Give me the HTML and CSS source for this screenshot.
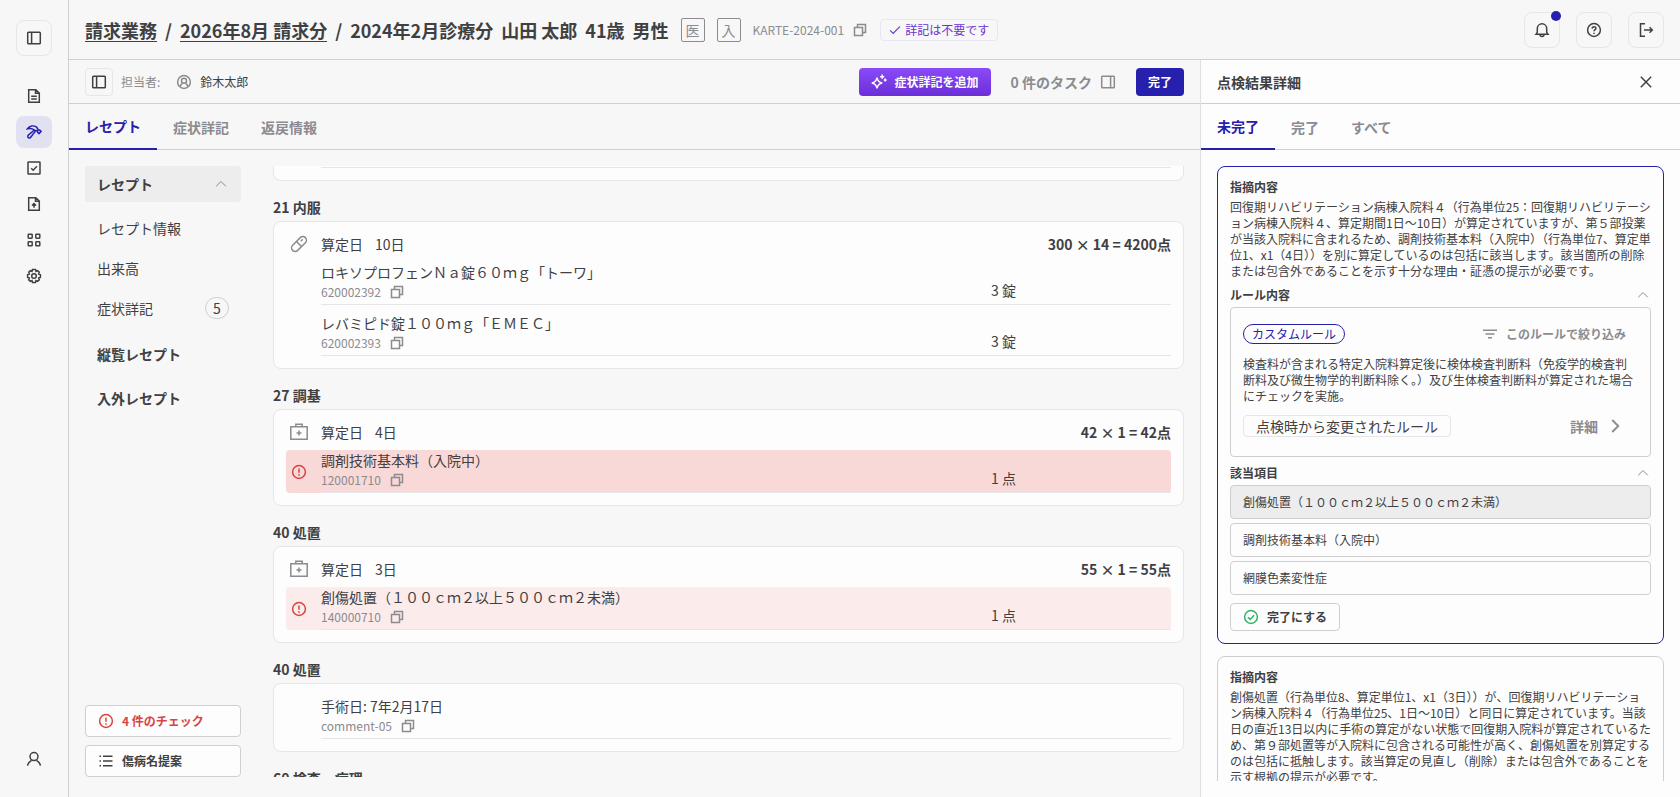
FILE: index.html
```html
<!DOCTYPE html>
<html lang="ja">

<head>
    <meta charset="UTF-8">
    <meta name="viewport" content="width=device-width, initial-scale=1.0">
    <title>レセプト点検</title>
    <link rel="stylesheet" href="styles.css">
</head>

<body>
    <!-- アイコン定義 -->
    <svg class="sprite" aria-hidden="true">
        <symbol id="i-panel-left" viewBox="0 0 16 16"><rect x="1.7" y="2.2" width="12.6" height="11.6" rx=".8"/><path d="M5.6 2.2v11.6"/></symbol>
        <symbol id="i-panel-right" viewBox="0 0 16 16"><rect x="1.7" y="2.2" width="12.6" height="11.6" rx=".8"/><path d="M10.6 2.2v11.6"/></symbol>
        <symbol id="i-doc" viewBox="0 0 16 16"><path d="M2.7 1.8h7.1L13.300 5v9.300H2.700zM9.500 1.900v3.400h3.500M5.200 8.300h5.600M5.200 11h5.600"/></symbol>
        <symbol id="i-hammer" viewBox="0 0 16 16"><path d="M1.500 4.800C3.800 1.600 7.600 1.100 10.600 3.100l1.500 2.600 1.500.2 1.400 1.500-2 2.200-1.500-1.500.1-1-1.800-.5L4.300 13.700l-1.500.2-1-1 .2-1.500L8.300 6C6.400 4.300 3.900 4.100 1.500 4.800zM8.300 6l1.700 1.100"/></symbol>
        <symbol id="i-check-box" viewBox="0 0 16 16"><rect x="2" y="2" width="12" height="12" rx=".6"/><path d="M5.2 8.2l2 2 3.7-3.9"/></symbol>
        <symbol id="i-doc-up" viewBox="0 0 16 16"><path d="M2.700 1.800h7.100L13.300 5v9.300H2.700zM9.500 1.900v3.400h3.500M8 11.800V7.600M6 9.500L8 7.500l2 2"/></symbol>
        <symbol id="i-grid" viewBox="0 0 16 16"><rect x="2.200" y="2.200" width="4" height="4" rx=".6"/><rect x="9.800" y="2.200" width="4" height="4" rx=".6"/><rect x="2.200" y="9.800" width="4" height="4" rx=".6"/><rect x="9.800" y="9.800" width="4" height="4" rx=".6"/></symbol>
        <symbol id="i-gear" viewBox="0 0 16 16"><path d="M6.5 1.6h3l.5 1.8 1.7-.7 1.6 1.6-.7 1.7 1.8.5v3l-1.8.5.7 1.7-1.6 1.6-1.7-.7-.5 1.8h-3L6 12.6l-1.7.7-1.6-1.6.7-1.7-1.8-.5v-3L3.400 6l-.7-1.700 1.600-1.600 1.700.7z"/><circle cx="8" cy="8" r="2.300"/></symbol>
        <symbol id="i-user" viewBox="0 0 16 16"><circle cx="8" cy="5.600" r="4"/><path d="M1.500 14.600c.5-2.400 2-4 4-5.300M14.500 14.600c-.5-2.400-2-4-4-5.300"/></symbol>
        <symbol id="i-user-circle" viewBox="0 0 16 16"><circle cx="8" cy="8" r="6.400"/><circle cx="8" cy="6.700" r="2.500"/><path d="M4.200 12.600c.3-1.700 1-2.600 2.200-3.300M11.800 12.600c-.3-1.700-1-2.600-2.200-3.300"/></symbol>
        <symbol id="i-copy" viewBox="0 0 16 16"><rect x="2.500" y="5.500" width="8" height="8"/><path d="M5.500 5.500v-3h8v8h-3"/></symbol>
        <symbol id="i-check" viewBox="0 0 16 16"><path d="M1.500 8.500l4 4L14.500 3.500"/></symbol>
        <symbol id="i-bell" viewBox="0 0 16 16"><path d="M2 12.200h12l-1.300-1.900V6.500a4.700 4.700 0 0 0-9.400 0v3.800zM6 12.400a2 2 0 0 0 4 0"/></symbol>
        <symbol id="i-help" viewBox="0 0 16 16"><circle cx="8" cy="8" r="6.400"/><path d="M6.100 6.600c.1-2.500 3.900-2.400 3.800-.1C9.800 7.700 8 7.800 8 9.300M8 10.700v1.200"/></symbol>
        <symbol id="i-logout" viewBox="0 0 16 16"><path d="M7 1.800H2.500v12.400H7M6 8h8.300M11.600 5.300L14.300 8l-2.700 2.700"/></symbol>
        <symbol id="i-sparkle" viewBox="0 0 16 16"><path d="M6 3.600c.6 3.500 1.700 4.800 5.200 5.400-3.500.7-4.600 1.900-5.200 5.400C5.400 10.900 4.200 9.700.8 9 4.200 8.400 5.400 7.100 6 3.600zM11.200.6v4.200M9.100 2.700h4.200M14.200 4.600v2.800M12.800 6h2.800"/></symbol>
        <symbol id="i-close" viewBox="0 0 16 16"><path d="M2.800 2.800l10.400 10.400M13.200 2.800L2.800 13.200"/></symbol>
        <symbol id="i-up" viewBox="0 0 16 16"><path d="M3.200 10.300L8 5.500l4.800 4.800"/></symbol>
        <symbol id="i-right" viewBox="0 0 16 16"><path d="M5 3.200l4.800 4.800L5 12.800"/></symbol>
        <symbol id="i-pill" viewBox="0 0 20 20"><rect x="6.400" y="1" width="7.200" height="18" rx="3.600" transform="rotate(45 10 10)"/><path d="M7.500 7.500l5 5M11.800 7.200l2-2"/></symbol>
        <symbol id="i-kit" viewBox="0 0 20 20"><path d="M1.800 4.800h16.400v12.500H1.800zM6.800 4.800V2.300h6.400v2.500M10 8.400v5M7.500 10.900h5"/></symbol>
        <symbol id="i-alert" viewBox="0 0 16 16"><circle cx="8" cy="8" r="6.400"/><path d="M8 4.400v4.400M8 10.200v1.600"/></symbol>
        <symbol id="i-list" viewBox="0 0 16 16"><path d="M5 3.200h9.500M5 8h9.500M5 12.800h9.500M1.500 3.200H3M1.500 8H3M1.500 12.800H3"/></symbol>
        <symbol id="i-filter" viewBox="0 0 16 16"><path d="M1 4.200h14M3.500 8h9M6 11.800h4"/></symbol>
        <symbol id="i-done" viewBox="0 0 16 16"><circle cx="8" cy="8" r="6.400"/><path d="M5 8.200l2.200 2.200 3.900-4.200"/></symbol>
    </svg>

    <div class="app">
        <nav class="rail" aria-label="メインメニュー">
            <button class="icon-button" aria-label="メニューを開く"><svg class="icon"><use href="#i-panel-left"/></svg></button>
            <div class="rail-links">
                <a class="rail-link" href="#" aria-label="書類"><svg class="icon"><use href="#i-doc"/></svg></a>
                <a class="rail-link active" href="#" aria-label="点検"><svg class="icon"><use href="#i-hammer"/></svg></a>
                <a class="rail-link" href="#" aria-label="確認"><svg class="icon"><use href="#i-check-box"/></svg></a>
                <a class="rail-link" href="#" aria-label="取込"><svg class="icon"><use href="#i-doc-up"/></svg></a>
                <a class="rail-link" href="#" aria-label="一覧"><svg class="icon"><use href="#i-grid"/></svg></a>
                <a class="rail-link" href="#" aria-label="設定"><svg class="icon"><use href="#i-gear"/></svg></a>
            </div>
            <a class="rail-link" href="#" aria-label="アカウント"><svg class="icon"><use href="#i-user"/></svg></a>
        </nav>

        <div class="page">
            <header class="header">
                <h1 class="breadcrumb">
                    <a href="#">請求業務</a>
                    <span>/</span>
                    <a href="#">2026年8月 請求分</a>
                    <span>/</span>
                    <span>2024年2月診療分</span>
                    <span>山田 太郎</span>
                    <span>41歳</span>
                    <span>男性</span>
                </h1>
                <span class="square-tag">医</span>
                <span class="square-tag">入</span>
                <div class="karte">
                    <span>KARTE-2024-001</span>
                    <button class="plain" aria-label="コピー"><svg class="icon"><use href="#i-copy"/></svg></button>
                </div>
                <span class="note-tag"><svg class="icon small"><use href="#i-check"/></svg>詳記は不要です</span>
                <div class="header-actions">
                    <button class="icon-button" aria-label="通知"><svg class="icon"><use href="#i-bell"/></svg><span class="dot"></span></button>
                    <button class="icon-button" aria-label="ヘルプ"><svg class="icon"><use href="#i-help"/></svg></button>
                    <button class="icon-button" aria-label="ログアウト"><svg class="icon"><use href="#i-logout"/></svg></button>
                </div>
            </header>

            <div class="columns">
                <main class="main">
                    <div class="toolbar">
                        <button class="icon-button compact" aria-label="サイドパネル"><svg class="icon"><use href="#i-panel-left"/></svg></button>
                        <span class="muted">担当者:</span>
                        <span class="assignee"><svg class="icon"><use href="#i-user-circle"/></svg>鈴木太郎</span>
                        <div class="toolbar-actions">
                            <button class="button ai"><svg class="icon"><use href="#i-sparkle"/></svg>症状詳記を追加</button>
                            <button class="plain tasks">0 件のタスク<svg class="icon"><use href="#i-panel-right"/></svg></button>
                            <button class="button primary">完了</button>
                        </div>
                    </div>
                    <div class="tabs">
                        <a class="tab active" href="#">レセプト</a>
                        <a class="tab" href="#">症状詳記</a>
                        <a class="tab" href="#">返戻情報</a>
                    </div>

                    <div class="workspace">
                        <aside class="side">
                            <button class="side-group open">レセプト<svg class="icon"><use href="#i-up"/></svg></button>
                            <div class="side-items">
                                <a class="side-item" href="#">レセプト情報</a>
                                <a class="side-item" href="#">出来高</a>
                                <a class="side-item" href="#">症状詳記<span class="count">5</span></a>
                            </div>
                            <button class="side-group">縦覧レセプト</button>
                            <button class="side-group">入外レセプト</button>
                            <div class="side-bottom">
                                <button class="outline error"><svg class="icon"><use href="#i-alert"/></svg>4 件のチェック</button>
                                <button class="outline"><svg class="icon"><use href="#i-list"/></svg>傷病名提案</button>
                            </div>
                        </aside>

                        <div class="receipt">
                            <div class="card continued">
                                <div class="row"><div class="row-body"></div></div>
                            </div>

                            <section>
                                <h2>21 内服</h2>
                                <div class="card">
                                    <div class="card-head">
                                        <svg class="icon large"><use href="#i-pill"/></svg>
                                        <span>算定日</span><span>10日</span>
                                        <strong>300 × 14 = 4200点</strong>
                                    </div>
                                    <div class="row">
                                        <div class="row-body">
                                            <div>
                                                <p class="name">ロキソプロフェンＮａ錠６０ｍｇ「トーワ」</p>
                                                <p class="code">620002392<button class="plain" aria-label="コピー"><svg class="icon"><use href="#i-copy"/></svg></button></p>
                                            </div>
                                            <span class="amount">3 錠</span>
                                        </div>
                                    </div>
                                    <div class="row">
                                        <div class="row-body">
                                            <div>
                                                <p class="name">レバミピド錠１００ｍｇ「ＥＭＥＣ」</p>
                                                <p class="code">620002393<button class="plain" aria-label="コピー"><svg class="icon"><use href="#i-copy"/></svg></button></p>
                                            </div>
                                            <span class="amount">3 錠</span>
                                        </div>
                                    </div>
                                </div>
                            </section>

                            <section>
                                <h2>27 調基</h2>
                                <div class="card">
                                    <div class="card-head">
                                        <svg class="icon large"><use href="#i-kit"/></svg>
                                        <span>算定日</span><span>4日</span>
                                        <strong>42 × 1 = 42点</strong>
                                    </div>
                                    <div class="row alert selected">
                                        <svg class="icon"><use href="#i-alert"/></svg>
                                        <div class="row-body">
                                            <div>
                                                <p class="name">調剤技術基本料（入院中）</p>
                                                <p class="code">120001710<button class="plain" aria-label="コピー"><svg class="icon"><use href="#i-copy"/></svg></button></p>
                                            </div>
                                            <span class="amount">1 点</span>
                                        </div>
                                    </div>
                                </div>
                            </section>

                            <section>
                                <h2>40 処置</h2>
                                <div class="card">
                                    <div class="card-head">
                                        <svg class="icon large"><use href="#i-kit"/></svg>
                                        <span>算定日</span><span>3日</span>
                                        <strong>55 × 1 = 55点</strong>
                                    </div>
                                    <div class="row alert">
                                        <svg class="icon"><use href="#i-alert"/></svg>
                                        <div class="row-body">
                                            <div>
                                                <p class="name">創傷処置（１００ｃｍ２以上５００ｃｍ２未満）</p>
                                                <p class="code">140000710<button class="plain" aria-label="コピー"><svg class="icon"><use href="#i-copy"/></svg></button></p>
                                            </div>
                                            <span class="amount">1 点</span>
                                        </div>
                                    </div>
                                </div>
                            </section>

                            <section>
                                <h2>40 処置</h2>
                                <div class="card">
                                    <div class="row">
                                        <div class="row-body">
                                            <div>
                                                <p class="name">手術日: 7年2月17日</p>
                                                <p class="code">comment-05<button class="plain" aria-label="コピー"><svg class="icon"><use href="#i-copy"/></svg></button></p>
                                            </div>
                                        </div>
                                    </div>
                                </div>
                            </section>

                            <section>
                                <h2>60 検査・病理</h2>
                            </section>
                        </div>
                    </div>
                </main>

                <aside class="panel">
                    <div class="panel-head">
                        <h2>点検結果詳細</h2>
                        <button class="plain" aria-label="閉じる"><svg class="icon"><use href="#i-close"/></svg></button>
                    </div>
                    <div class="tabs">
                        <a class="tab active" href="#">未完了</a>
                        <a class="tab" href="#">完了</a>
                        <a class="tab" href="#">すべて</a>
                    </div>
                    <div class="findings">
                        <article class="finding current">
                            <h3>指摘内容</h3>
                            <p class="text">回復期リハビリテーション病棟入院料４（行為単位25：回復期リハビリテーション病棟入院料４、算定期間1日〜10日）が算定されていますが、第５部投薬が当該入院料に含まれるため、調剤技術基本料（入院中）（行為単位7、算定単位1、x1（4日））を別に算定しているのは包括に該当します。該当箇所の削除または包含外であることを示す十分な理由・証憑の提示が必要です。</p>
                            <button class="fold">ルール内容<svg class="icon"><use href="#i-up"/></svg></button>
                            <div class="rule">
                                <div class="rule-line">
                                    <span class="rule-kind">カスタムルール</span>
                                    <button class="plain ghost"><svg class="icon"><use href="#i-filter"/></svg>このルールで絞り込み</button>
                                </div>
                                <p class="text">検査料が含まれる特定入院料算定後に検体検査判断料（免疫学的検査判断料及び微生物学的判断料除く。）及び生体検査判断料が算定された場合にチェックを実施。</p>
                                <div class="rule-line">
                                    <span class="changed">点検時から変更されたルール</span>
                                    <button class="plain ghost detail">詳細<svg class="icon large"><use href="#i-right"/></svg></button>
                                </div>
                            </div>
                            <button class="fold">該当項目<svg class="icon"><use href="#i-up"/></svg></button>
                            <div class="targets">
                                <button class="target selected">創傷処置（１００ｃｍ２以上５００ｃｍ２未満）</button>
                                <button class="target">調剤技術基本料（入院中）</button>
                                <button class="target">網膜色素変性症</button>
                            </div>
                            <button class="outline done"><svg class="icon"><use href="#i-done"/></svg>完了にする</button>
                        </article>
                        <article class="finding">
                            <h3>指摘内容</h3>
                            <p class="text">創傷処置（行為単位8、算定単位1、x1（3日））が、回復期リハビリテーション病棟入院料４（行為単位25、1日〜10日）と同日に算定されています。当該日の直近13日以内に手術の算定がない状態で回復期入院料が算定されているため、第９部処置等が入院料に包含される可能性が高く、創傷処置を別算定するのは包括に抵触します。該当算定の見直し（削除）または包含外であることを示す根拠の提示が必要です。</p>
                        </article>
                    </div>
                </aside>
            </div>
        </div>
    </div>
</body>

</html>
```

FILE: styles.css
```css
* {
    box-sizing: border-box;
}

body {
    margin: 0;
    font-family: "Noto Sans CJK JP", "Noto Sans", sans-serif;
    font-size: 14px;
    line-height: 20px;
    color: #404042;
    background-color: #f7f7f7;
}

h1, h2, h3, p {
    margin: 0;
}

a {
    color: inherit;
    text-decoration: none;
}

button {
    font: inherit;
    color: inherit;
    margin: 0;
    cursor: pointer;
}

.sprite {
    display: none;
}

.icon {
    display: block;
    flex: none;
    width: 16px;
    height: 16px;
    fill: none;
    stroke: currentColor;
    stroke-width: 1.5;
}

.icon.small {
    width: 12px;
    height: 12px;
}

.icon.large {
    width: 20px;
    height: 20px;
}

.app {
    display: flex;
    height: 100vh;
}

/* 左端メニュー */
.rail {
    flex: none;
    display: flex;
    flex-direction: column;
    align-items: center;
    width: 69px;
    padding: 20px 0 22px;
    border-right: 1px solid #cfcfd1;
}

.rail-links {
    flex: 1;
    display: flex;
    flex-direction: column;
    gap: 4px;
    padding-top: 24px;
}

.rail-link {
    display: flex;
    align-items: center;
    justify-content: center;
    width: 36px;
    height: 32px;
    border-radius: 8px;
}

.rail-link.active {
    color: #2720ad;
    background-color: #e1e1f1;
}

.icon-button {
    position: relative;
    display: flex;
    align-items: center;
    justify-content: center;
    width: 36px;
    height: 36px;
    padding: 0;
    background: none;
    border: 1px solid #e6e6e8;
    border-radius: 8px;
}

.icon-button.compact {
    width: 28px;
    height: 28px;
    border-radius: 4px;
}

.dot {
    position: absolute;
    top: -2px;
    right: -2px;
    width: 10px;
    height: 10px;
    border-radius: 50%;
    background-color: #2720ad;
}

.plain {
    display: flex;
    align-items: center;
    padding: 0;
    background: none;
    border: none;
}

/* ヘッダー */
.page {
    flex: 1;
    min-width: 0;
    display: flex;
    flex-direction: column;
}

.header {
    flex: none;
    display: flex;
    align-items: center;
    gap: 12px;
    height: 60px;
    padding: 0 16px;
    border-bottom: 1px solid #cfcfd1;
}

.breadcrumb {
    display: flex;
    gap: 8px;
    padding-top: 2px;
    font-size: 18px;
    line-height: 22px;
    white-space: nowrap;
}

.breadcrumb a {
    border-bottom: 1px solid #404042;
}

.square-tag {
    display: flex;
    align-items: center;
    justify-content: center;
    width: 24px;
    height: 24px;
    color: #8b8b90;
    border: 1px solid #8b8b90;
    border-radius: 2px;
}

.karte {
    display: flex;
    align-items: center;
    gap: 8px;
    font-size: 12px;
    color: #8b8b90;
}

.note-tag {
    display: flex;
    align-items: center;
    gap: 4px;
    height: 22px;
    padding: 0 8px;
    font-size: 12px;
    color: #6a34d0;
    border: 1px solid #e8e5f5;
    border-radius: 4px;
}

.header-actions {
    display: flex;
    gap: 16px;
    margin-left: auto;
}

.columns {
    flex: 1;
    min-height: 0;
    display: flex;
}

.main {
    flex: 1;
    min-width: 0;
    display: flex;
    flex-direction: column;
}

.toolbar {
    flex: none;
    display: flex;
    align-items: center;
    gap: 8px;
    height: 44px;
    padding: 0 16px;
    font-size: 12px;
    border-bottom: 1px solid #cfcfd1;
}

.muted {
    color: #8b8b90;
}

.assignee {
    display: flex;
    align-items: center;
    gap: 8px;
    margin-left: 8px;
}

.assignee .icon {
    color: #8b8b90;
}

.toolbar-actions {
    display: flex;
    align-items: center;
    gap: 20px;
    margin-left: auto;
}

.button {
    display: flex;
    align-items: center;
    gap: 8px;
    height: 28px;
    padding: 0 12px;
    font-weight: bold;
    color: #fff;
    border: none;
    border-radius: 4px;
}

.button.ai {
    background: linear-gradient(#8a4af8, #6b2fd8);
}

.button.primary {
    background-color: #2720ad;
}

.tasks {
    gap: 8px;
    font-size: 14px;
    font-weight: bold;
    color: #8b8b90;
}

.tabs {
    flex: none;
    display: flex;
    height: 46px;
    border-bottom: 1px solid #cfcfd1;
}

.tab {
    height: 46px;
    padding: 13px 16px;
    font-weight: bold;
    color: #8b8b90;
}

.tab.active {
    padding-top: 12px;
    color: #2720ad;
    border-bottom: 2px solid #2720ad;
}

.workspace {
    flex: 1;
    min-height: 0;
    display: flex;
    gap: 32px;
    padding: 16px 16px 20px;
}

/* レセプトのナビゲーション */
.side {
    flex: none;
    display: flex;
    flex-direction: column;
    width: 156px;
}

.side-group {
    display: flex;
    align-items: center;
    justify-content: space-between;
    height: 36px;
    margin-top: 8px;
    padding: 0 12px;
    font-weight: bold;
    background: none;
    border: none;
    border-radius: 2px;
}

.side-group.open {
    margin-top: 0;
    background-color: #ededed;
}

.side-group .icon, .fold .icon {
    color: #8b8b90;
    stroke-width: 1;
}

.side-items {
    padding-top: 6px;
}

.side-item {
    display: flex;
    align-items: center;
    justify-content: space-between;
    height: 40px;
    padding: 0 12px;
}

.count {
    width: 24px;
    height: 22px;
    text-align: center;
    border: 1px solid #cfcfd1;
    border-radius: 12px;
}

.side-bottom {
    display: flex;
    flex-direction: column;
    gap: 8px;
    margin-top: auto;
}

.outline {
    display: flex;
    align-items: center;
    gap: 8px;
    height: 32px;
    padding: 0 12px;
    font-size: 12px;
    font-weight: bold;
    background-color: #fdfdfd;
    border: 1px solid #cfcfd1;
    border-radius: 4px;
}

.outline.error {
    color: #d9443f;
}

/* レセプト本文 */
.receipt {
    flex: 1;
    min-width: 0;
    display: flex;
    flex-direction: column;
    gap: 16px;
    overflow: hidden;
}

.receipt > * {
    flex: none;
}

.receipt h2 {
    margin-bottom: 4px;
    font-size: 14px;
}

.card {
    padding: 12px;
    background-color: #fdfdfd;
    border: 1px solid #e6e6e8;
    border-radius: 8px;
}

.card.continued {
    padding-top: 1px;
    border-top: none;
    border-radius: 0 0 8px 8px;
}

.card-head {
    display: flex;
    gap: 12px;
    margin-bottom: 8px;
    padding-left: 3px;
}

.card-head .icon {
    color: #8b8b90;
}

.card-head strong {
    margin-left: auto;
}

.row {
    display: flex;
    align-items: center;
    padding-left: 35px;
    border-radius: 4px;
}

.row + .row {
    margin-top: 8px;
}

.row.alert {
    gap: 14px;
    padding-left: 5px;
    background-color: #fcebeb;
}

.row.alert.selected {
    background-color: #f9d9d8;
}

.row.alert > .icon {
    color: #d9443f;
}

.row-body {
    flex: 1;
    display: grid;
    grid-template-columns: 1fr 180px;
    align-items: end;
    border-bottom: 1px solid #e6e6e8;
}

.name {
    margin-bottom: 2px;
}

.code {
    display: flex;
    gap: 8px;
    margin-bottom: 4px;
    font-size: 12px;
    line-height: 16px;
    color: #8b8b90;
}

.amount {
    margin-bottom: 4px;
}

/* 点検結果 */
.panel {
    flex: none;
    display: flex;
    flex-direction: column;
    width: 480px;
    background-color: #fdfdfd;
    border-left: 1px solid #e0e0e2;
}

.panel-head {
    flex: none;
    display: flex;
    align-items: center;
    justify-content: space-between;
    height: 44px;
    padding: 0 26px 0 16px;
    border-bottom: 1px solid #cfcfd1;
}

.panel-head h2 {
    font-size: 14px;
}

.findings {
    flex: 1;
    min-height: 0;
    display: flex;
    flex-direction: column;
    gap: 12px;
    margin: 16px;
    overflow: hidden;
}

.finding {
    flex: none;
    padding: 12px;
    font-size: 12px;
    line-height: 16px;
    border: 1px solid #cfcfd1;
    border-radius: 8px;
}

.finding.current {
    border-color: #2720ad;
}

.finding h3 {
    margin-bottom: 4px;
    font-size: 12px;
}

.fold {
    display: flex;
    align-items: center;
    justify-content: space-between;
    width: 100%;
    height: 24px;
    margin-top: 4px;
    padding: 0;
    font-weight: bold;
    background: none;
    border: none;
}

.rule {
    display: flex;
    flex-direction: column;
    gap: 8px;
    padding: 12px 12px 16px;
    border: 1px solid #cfcfd1;
    border-radius: 4px;
}

.rule-line {
    display: flex;
    align-items: center;
    justify-content: space-between;
    height: 28px;
}

.rule-kind {
    padding: 1px 8px;
    color: #2720ad;
    border: 1px solid #2720ad;
    border-radius: 10px;
}

.ghost {
    gap: 8px;
    padding: 0 12px;
    font-weight: bold;
    color: #8b8b90;
}

.ghost.detail {
    font-size: 14px;
}

.changed {
    padding: 0 12px;
    font-size: 14px;
    line-height: 20px;
    border: 1px solid #e6e6e8;
    border-radius: 4px;
}

.targets {
    display: flex;
    flex-direction: column;
    gap: 4px;
    margin-bottom: 8px;
}

.target {
    height: 34px;
    padding: 0 12px;
    text-align: left;
    background-color: #fdfdfd;
    border: 1px solid #cfcfd1;
    border-radius: 4px;
}

.target.selected {
    background-color: #ededed;
}

.outline.done {
    height: 28px;
}

.outline.done .icon {
    color: #30b566;
}
```
